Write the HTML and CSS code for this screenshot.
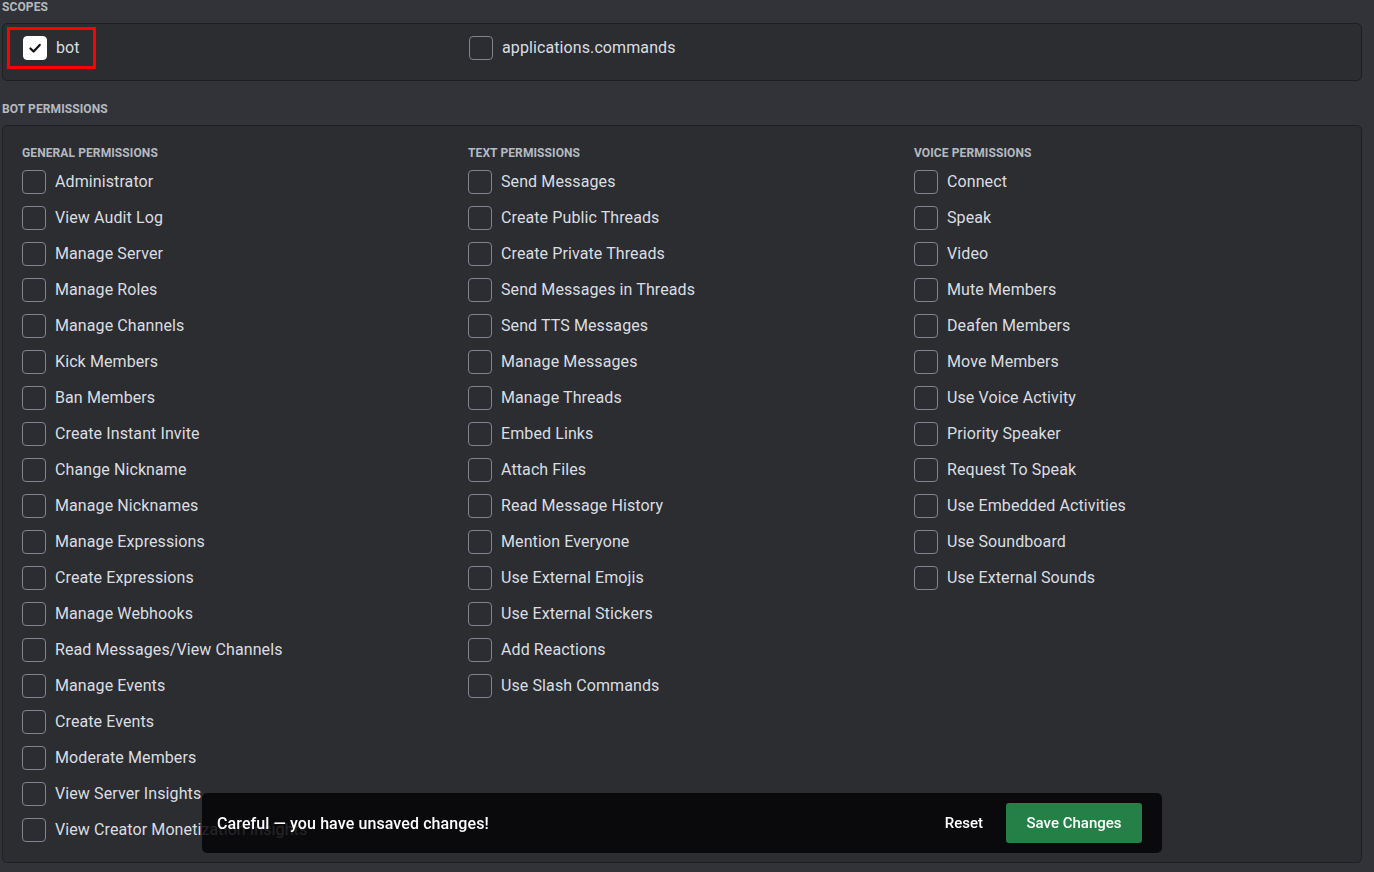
FILE: index.html
```html
<!DOCTYPE html>
<html>
<head>
<meta charset="utf-8">
<link rel="stylesheet" href="styles.css">
</head>
<body>
<div class="page">
  <h2 class="section-label">Scopes</h2>
  <div class="panel scopes">
    <div class="scope-col">
      <label class="item highlight"><span class="box checked"><svg viewBox="0 0 24 24" width="20" height="20"><path d="M6.5 12.5l3.8 3.8 7.4-8" fill="none" stroke="#111" stroke-width="2.6" stroke-linecap="round" stroke-linejoin="round"/></svg></span><span class="text">bot</span></label>
    </div>
    <div class="scope-col">
      <label class="item"><span class="box"></span><span class="text">applications.commands</span></label>
    </div>
  </div>

  <h2 class="section-label second">Bot Permissions</h2>
  <div class="panel perms">
    <div class="col">
      <h3 class="col-head">General Permissions</h3>
      <label class="item row"><span class="box"></span><span class="text">Administrator</span></label>
      <label class="item row"><span class="box"></span><span class="text">View Audit Log</span></label>
      <label class="item row"><span class="box"></span><span class="text">Manage Server</span></label>
      <label class="item row"><span class="box"></span><span class="text">Manage Roles</span></label>
      <label class="item row"><span class="box"></span><span class="text">Manage Channels</span></label>
      <label class="item row"><span class="box"></span><span class="text">Kick Members</span></label>
      <label class="item row"><span class="box"></span><span class="text">Ban Members</span></label>
      <label class="item row"><span class="box"></span><span class="text">Create Instant Invite</span></label>
      <label class="item row"><span class="box"></span><span class="text">Change Nickname</span></label>
      <label class="item row"><span class="box"></span><span class="text">Manage Nicknames</span></label>
      <label class="item row"><span class="box"></span><span class="text">Manage Expressions</span></label>
      <label class="item row"><span class="box"></span><span class="text">Create Expressions</span></label>
      <label class="item row"><span class="box"></span><span class="text">Manage Webhooks</span></label>
      <label class="item row"><span class="box"></span><span class="text">Read Messages/View Channels</span></label>
      <label class="item row"><span class="box"></span><span class="text">Manage Events</span></label>
      <label class="item row"><span class="box"></span><span class="text">Create Events</span></label>
      <label class="item row"><span class="box"></span><span class="text">Moderate Members</span></label>
      <label class="item row"><span class="box"></span><span class="text">View Server Insights</span></label>
      <label class="item row"><span class="box"></span><span class="text">View Creator Monetization Insights</span></label>
    </div>
    <div class="col">
      <h3 class="col-head">Text Permissions</h3>
      <label class="item row"><span class="box"></span><span class="text">Send Messages</span></label>
      <label class="item row"><span class="box"></span><span class="text">Create Public Threads</span></label>
      <label class="item row"><span class="box"></span><span class="text">Create Private Threads</span></label>
      <label class="item row"><span class="box"></span><span class="text">Send Messages in Threads</span></label>
      <label class="item row"><span class="box"></span><span class="text">Send TTS Messages</span></label>
      <label class="item row"><span class="box"></span><span class="text">Manage Messages</span></label>
      <label class="item row"><span class="box"></span><span class="text">Manage Threads</span></label>
      <label class="item row"><span class="box"></span><span class="text">Embed Links</span></label>
      <label class="item row"><span class="box"></span><span class="text">Attach Files</span></label>
      <label class="item row"><span class="box"></span><span class="text">Read Message History</span></label>
      <label class="item row"><span class="box"></span><span class="text">Mention Everyone</span></label>
      <label class="item row"><span class="box"></span><span class="text">Use External Emojis</span></label>
      <label class="item row"><span class="box"></span><span class="text">Use External Stickers</span></label>
      <label class="item row"><span class="box"></span><span class="text">Add Reactions</span></label>
      <label class="item row"><span class="box"></span><span class="text">Use Slash Commands</span></label>
    </div>
    <div class="col">
      <h3 class="col-head">Voice Permissions</h3>
      <label class="item row"><span class="box"></span><span class="text">Connect</span></label>
      <label class="item row"><span class="box"></span><span class="text">Speak</span></label>
      <label class="item row"><span class="box"></span><span class="text">Video</span></label>
      <label class="item row"><span class="box"></span><span class="text">Mute Members</span></label>
      <label class="item row"><span class="box"></span><span class="text">Deafen Members</span></label>
      <label class="item row"><span class="box"></span><span class="text">Move Members</span></label>
      <label class="item row"><span class="box"></span><span class="text">Use Voice Activity</span></label>
      <label class="item row"><span class="box"></span><span class="text">Priority Speaker</span></label>
      <label class="item row"><span class="box"></span><span class="text">Request To Speak</span></label>
      <label class="item row"><span class="box"></span><span class="text">Use Embedded Activities</span></label>
      <label class="item row"><span class="box"></span><span class="text">Use Soundboard</span></label>
      <label class="item row"><span class="box"></span><span class="text">Use External Sounds</span></label>
    </div>
  </div>
</div>

<div class="toast">
  <span class="toast-msg">Careful — you have unsaved changes!</span>
  <div class="toast-actions">
    <button class="btn-reset">Reset</button>
    <button class="btn-save">Save Changes</button>
  </div>
</div>
</body>
</html>
```

FILE: styles.css
```css
* { box-sizing: border-box; }
html, body {
  margin: 0;
  padding: 0;
  background: #313338;
  height: 100%;
  overflow: hidden;
}
body {
  font-family: Roboto, "Noto Sans", sans-serif;
  color: #dbdee1;
}
.page {
  padding: 0 12px 0 2px;
}
.section-label {
  margin: 0;
  font-size: 12px;
  line-height: 14px;
  font-weight: 700;
  text-transform: uppercase;
  color: #b5bac1;
  letter-spacing: 0.1px;
  height: 23px;
}
.section-label.second {
  margin-top: 20px;
  height: 24px;
  padding-top: 1px;
}
.panel {
  background: #2b2d31;
  border: 1px solid #1e1f22;
  border-radius: 5px;
}
.scopes {
  display: grid;
  grid-template-columns: 446px 446px 1fr;
  padding: 12px 20px 20px 20px;
  height: 58px;
}
.perms {
  display: grid;
  grid-template-columns: 446px 446px 1fr;
  padding: 19px 19px 13px 19px;
  height: 738px;
}
.col-head {
  margin: 0 0 3px 0;
  font-size: 12px;
  line-height: 16px;
  font-weight: 700;
  text-transform: uppercase;
  color: #b5bac1;
  letter-spacing: 0.1px;
}
.item {
  display: inline-flex;
  align-items: center;
  gap: 9px;
  font-size: 16px;
  line-height: 20px;
  letter-spacing: 0.1px;
  color: #dbdee1;
  white-space: nowrap;
}
.row {
  display: flex;
  height: 36px;
}
.box {
  flex: none;
  width: 24px;
  height: 24px;
  border: 1px solid #80848e;
  border-radius: 4px;
  display: inline-flex;
  align-items: center;
  justify-content: center;
}
.box.checked {
  background: #ffffff;
  border-color: #ffffff;
}
.highlight {
  outline: 3px solid #ff0000;
  padding: 6px 13px 6px 13px;
  margin: -6px -13px -6px -13px;
  height: 36px;
}
.toast {
  position: fixed;
  left: 202px;
  top: 793px;
  width: 960px;
  height: 60px;
  background: rgba(5, 5, 6, 0.85);
  border-radius: 5px;
  display: flex;
  align-items: center;
  justify-content: space-between;
  padding: 0 20px 0 15px;
}
.toast-msg {
  font-size: 16px;
  font-weight: 500;
  letter-spacing: 0.1px;
  color: #ffffff;
}
.toast-actions {
  display: flex;
  align-items: center;
  gap: 4px;
}
.btn-reset {
  background: none;
  border: 0;
  color: #ffffff;
  font-family: inherit;
  font-size: 15px;
  font-weight: 500;
  padding: 0 19px 0 16px;
  height: 38px;
}
.btn-save {
  background: #248046;
  border: 0;
  border-radius: 3px;
  color: #ffffff;
  font-family: inherit;
  font-size: 15px;
  font-weight: 500;
  width: 136px;
  height: 40px;
}
```
